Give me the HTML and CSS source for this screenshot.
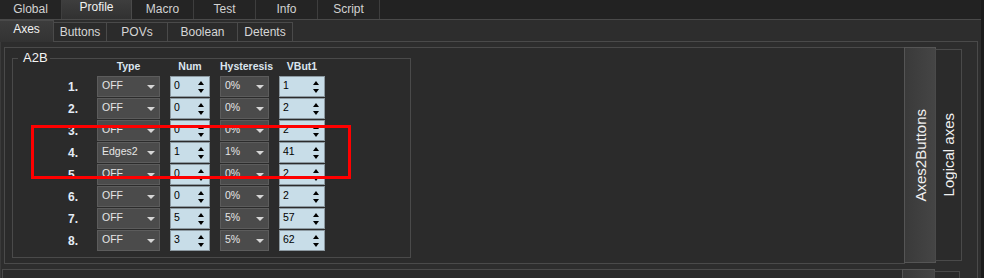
FILE: index.html
```html
<!DOCTYPE html>
<html lang="en">
<head>
    <meta charset="UTF-8">
    <meta name="viewport" content="width=device-width, initial-scale=1.0">
    <title>Profile - Axes</title>
    <link rel="stylesheet" href="styles.css">
</head>
<body>
    <div class="window">
        <div class="main-tabs">
            <div class="tab">Global</div>
            <div class="tab active">Profile</div>
            <div class="tab">Macro</div>
            <div class="tab">Test</div>
            <div class="tab">Info</div>
            <div class="tab">Script</div>
        </div>

        <div class="sub-tabs">
            <div class="subtab active tab-axes">Axes</div>
            <div class="subtab tab-buttons">Buttons</div>
            <div class="subtab tab-povs">POVs</div>
            <div class="subtab tab-boolean">Boolean</div>
            <div class="subtab tab-detents">Detents</div>
        </div>

        <div class="sub-pane">
            <div class="vtab-widget">
                <div class="vtab-page">
                    <div class="group">
                        <span class="group-title">A2B</span>
                        <div class="a2b-grid">
                            <div></div>
                            <div class="head">Type</div>
                            <div class="head">Num</div>
                            <div class="head">Hysteresis</div>
                            <div class="head">VBut1</div>

                            <div class="row-label">1.</div>
                            <div class="combo"><span>OFF</span><i class="arrow"></i></div>
                            <div class="spin"><span>0</span><i class="spin-arrows"><b class="up"></b><b class="down"></b></i></div>
                            <div class="combo"><span>0%</span><i class="arrow"></i></div>
                            <div class="spin"><span>1</span><i class="spin-arrows"><b class="up"></b><b class="down"></b></i></div>

                            <div class="row-label">2.</div>
                            <div class="combo"><span>OFF</span><i class="arrow"></i></div>
                            <div class="spin"><span>0</span><i class="spin-arrows"><b class="up"></b><b class="down"></b></i></div>
                            <div class="combo"><span>0%</span><i class="arrow"></i></div>
                            <div class="spin"><span>2</span><i class="spin-arrows"><b class="up"></b><b class="down"></b></i></div>

                            <div class="row-label">3.</div>
                            <div class="combo"><span>OFF</span><i class="arrow"></i></div>
                            <div class="spin"><span>0</span><i class="spin-arrows"><b class="up"></b><b class="down"></b></i></div>
                            <div class="combo"><span>0%</span><i class="arrow"></i></div>
                            <div class="spin"><span>2</span><i class="spin-arrows"><b class="up"></b><b class="down"></b></i></div>

                            <div class="row-label">4.</div>
                            <div class="combo"><span>Edges2</span><i class="arrow"></i></div>
                            <div class="spin"><span>1</span><i class="spin-arrows"><b class="up"></b><b class="down"></b></i></div>
                            <div class="combo"><span>1%</span><i class="arrow"></i></div>
                            <div class="spin"><span>41</span><i class="spin-arrows"><b class="up"></b><b class="down"></b></i></div>

                            <div class="row-label">5.</div>
                            <div class="combo"><span>OFF</span><i class="arrow"></i></div>
                            <div class="spin"><span>0</span><i class="spin-arrows"><b class="up"></b><b class="down"></b></i></div>
                            <div class="combo"><span>0%</span><i class="arrow"></i></div>
                            <div class="spin"><span>2</span><i class="spin-arrows"><b class="up"></b><b class="down"></b></i></div>

                            <div class="row-label">6.</div>
                            <div class="combo"><span>OFF</span><i class="arrow"></i></div>
                            <div class="spin"><span>0</span><i class="spin-arrows"><b class="up"></b><b class="down"></b></i></div>
                            <div class="combo"><span>0%</span><i class="arrow"></i></div>
                            <div class="spin"><span>2</span><i class="spin-arrows"><b class="up"></b><b class="down"></b></i></div>

                            <div class="row-label">7.</div>
                            <div class="combo"><span>OFF</span><i class="arrow"></i></div>
                            <div class="spin"><span>5</span><i class="spin-arrows"><b class="up"></b><b class="down"></b></i></div>
                            <div class="combo"><span>5%</span><i class="arrow"></i></div>
                            <div class="spin"><span>57</span><i class="spin-arrows"><b class="up"></b><b class="down"></b></i></div>

                            <div class="row-label">8.</div>
                            <div class="combo"><span>OFF</span><i class="arrow"></i></div>
                            <div class="spin"><span>3</span><i class="spin-arrows"><b class="up"></b><b class="down"></b></i></div>
                            <div class="combo"><span>5%</span><i class="arrow"></i></div>
                            <div class="spin"><span>62</span><i class="spin-arrows"><b class="up"></b><b class="down"></b></i></div>
                        </div>
                    </div>
                </div>
                <div class="vtab-bar">
                    <div class="vtab active"><span>Axes2Buttons</span></div>
                    <div class="vtab"><span>Logical axes</span></div>
                </div>
            </div>

            <div class="vtab-widget next">
                <div class="vtab-page"></div>
                <div class="vtab-bar">
                    <div class="vtab active"></div>
                    <div class="vtab"></div>
                </div>
            </div>
        </div>

        <!-- annotation box drawn over the rows -->
        <div class="highlight"></div>
    </div>
    <div class="edge"></div>
</body>
</html>
```

FILE: styles.css
```css
* {
    box-sizing: border-box;
}

body {
    margin: 0;
    height: 278px;
    overflow: hidden;
    display: flex;
    background: #1b1b1b;
    font-family: "Liberation Sans", Arial, sans-serif;
}

.window {
    position: relative;
    width: 981px;
    height: 278px;
    background: #2d2d2d;
    overflow: hidden;
}

.edge {
    flex: 1;
    background: #1b1b1b;
}

/* top tabs */
.main-tabs {
    display: flex;
    height: 20px;
    background: #222;
    border-bottom: 1px solid #4a4a4a;
}

.tab {
    width: 62px;
    height: 19px;
    border-right: 1px solid #3e3e3e;
    color: #d2d2d2;
    font-size: 12px;
    line-height: 19px;
    text-align: center;
    background: #242424;
}

.tab.active {
    width: 70px;
    line-height: 15px;
    color: #f2f2f2;
    border-right-color: #4a4a4a;
    background: linear-gradient(#3e3e3e, #313131);
}

/* sub tabs */
.sub-tabs {
    display: flex;
    align-items: flex-end;
    height: 21px;
}

.subtab {
    height: 19px;
    margin-left: -1px;
    border: 1px solid #4a4a4a;
    border-bottom: none;
    background: #2b2b2b;
    color: #d6d6d6;
    font-size: 12px;
    line-height: 18px;
    text-align: center;
}

.subtab.active {
    position: relative;
    z-index: 1;
    height: 22px;
    margin-bottom: -1px;
    margin-left: 0;
    border-left: none;
    line-height: 17px;
    color: #f2f2f2;
    background: linear-gradient(#3c3c3c, #333);
}

.tab-axes { width: 54px; }
.tab-buttons { width: 54px; }
.tab-povs { width: 62px; }
.tab-boolean { width: 71px; }
.tab-detents { width: 56px; }

.sub-pane {
    width: 978px;
    height: 237px;
    padding: 5px 0 0 3px;
    border-top: 1px solid #4a4a4a;
    border-left: 1px solid #3a3a3a;
    border-right: 1px solid #4a4a4a;
}

/* vertical tab widgets */
.vtab-widget {
    display: flex;
    align-items: flex-start;
}

.vtab-page {
    width: 901px;
    height: 217px;
    padding: 10px 0 0 7px;
    border: 1px solid #4a4a4a;
    background: #2b2b2b;
}

.vtab-bar {
    display: flex;
    align-items: flex-start;
    margin-left: -1px;
}

.vtab {
    display: flex;
    align-items: center;
    justify-content: center;
    width: 27px;
    height: 212px;
    margin-top: 2px;
    margin-left: -1px;
    border: 1px solid #4a4a4a;
    background: #2b2b2b;
}

.vtab.active {
    width: 32px;
    height: 216px;
    margin-top: 0;
    margin-left: 0;
    border-color: #555;
    background: linear-gradient(90deg, #3a3a3a, #454545);
}

.vtab span {
    writing-mode: vertical-rl;
    transform: rotate(180deg);
    color: #f0f0f0;
    font-size: 15px;
    white-space: nowrap;
}

.vtab-widget.next {
    margin: 5px 0 0 -2px;
}

.vtab-widget.next .vtab.active {
    width: 33px;
}

.vtab-widget.next .vtab {
    width: 26px;
}

/* group box */
.group {
    position: relative;
    width: 399px;
    height: 200px;
    border: 1px solid #4a4a4a;
}

.group-title {
    position: absolute;
    top: -9px;
    left: 5px;
    padding: 0 2px 0 5px;
    background: #2b2b2b;
    color: #f4f4f4;
    font-size: 13px;
    line-height: 15px;
}

.a2b-grid {
    display: grid;
    grid-template-columns: 74px 63px 40px 49px 46px;
    grid-template-rows: 16px repeat(8, 21px);
    column-gap: 10px;
    row-gap: 1px;
}

.head {
    color: #dbe5ee;
    font-size: 10.5px;
    font-weight: bold;
    line-height: 14px;
    text-align: center;
}

.row-label {
    padding: 1px 9px 0 0;
    color: #e4ecf6;
    font-size: 12px;
    font-weight: bold;
    line-height: 21px;
    text-align: right;
}

.combo {
    display: flex;
    justify-content: space-between;
    padding: 0 4px 0 4px;
    border: 1px solid #5c5c5c;
    background: #4b4b4b;
    color: #e6e6e6;
    font-size: 10.5px;
    line-height: 17px;
}

.arrow {
    align-self: center;
    width: 0;
    height: 0;
    border-left: 4px solid transparent;
    border-right: 4px solid transparent;
    border-top: 4px solid #d6d6d6;
}

.spin {
    display: flex;
    justify-content: space-between;
    padding: 0 5px 0 3px;
    border: 1px solid #8c99a1;
    background: #c8dde8;
    color: #000;
    font-size: 10.5px;
    line-height: 17px;
}

.spin-arrows {
    display: flex;
    flex-direction: column;
    gap: 4px;
    padding-top: 4px;
}

.spin-arrows b {
    display: block;
    width: 0;
    height: 0;
    border-left: 3.5px solid transparent;
    border-right: 3.5px solid transparent;
}

.spin-arrows .up {
    border-bottom: 4px solid #000;
}

.spin-arrows .down {
    border-top: 4px solid #000;
}

.highlight {
    position: absolute;
    left: 31px;
    top: 125px;
    width: 320px;
    height: 54px;
    border: 3px solid #ff0000;
}
```
